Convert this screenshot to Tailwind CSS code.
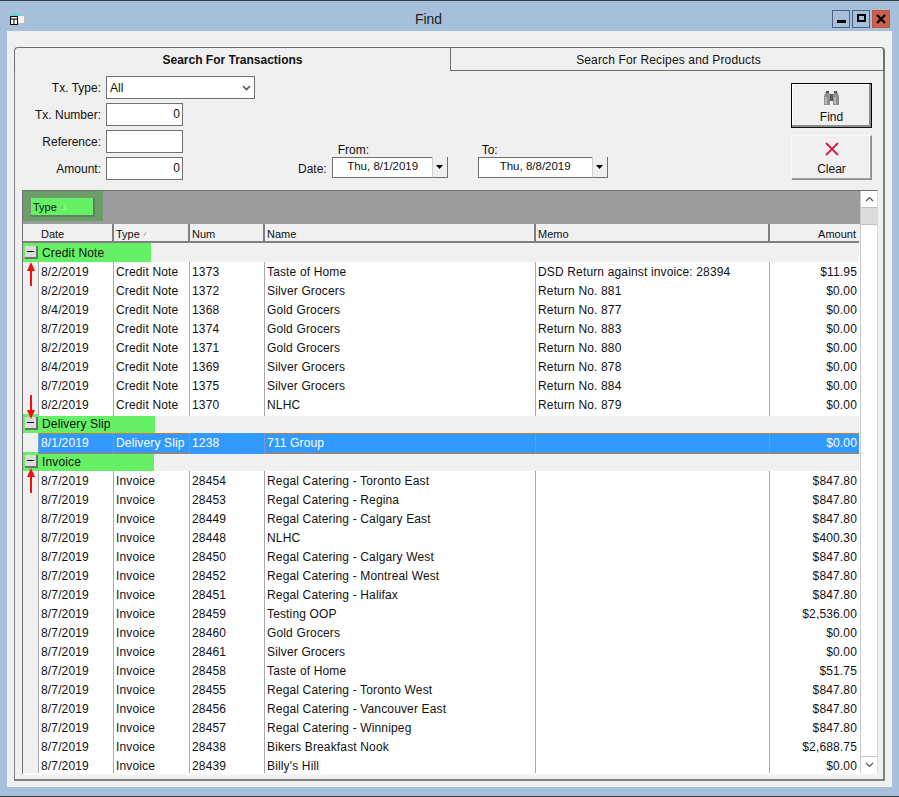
<!DOCTYPE html>
<html lang="en">
  <head>
    <meta charset="UTF-8" />
    <title>Find</title>
    <script src="https://cdn.jsdelivr.net/npm/@tailwindcss/browser@4"></script>
  </head>
  <body class="w-[899px] h-[797px] overflow-hidden bg-[#a6c0dc] font-['Liberation_Sans',Arial,sans-serif] text-[12px] text-[#111]">
    <div class="h-[797px] border-t border-b border-[#3c3c3c] flex flex-col">
      <!-- Title bar -->
      <div class="h-[30px] flex items-center shrink-0">
        <svg class="ml-[10px] mt-[8px] w-[15px] h-[12px]" viewBox="0 0 15 12">
          <rect x="2" y="0" width="10" height="2" fill="#5fd8dc" />
          <rect x="8" y="2" width="6" height="7" fill="#f4f4f4" />
          <path d="M14.5 3v7" stroke="#b8b8b8" />
          <rect x="0.5" y="2.5" width="7" height="8" fill="#fff" stroke="#000" />
          <path d="M0 5h8" stroke="#000" />
          <path d="M4 5v6" stroke="#000" />
        </svg>
        <div class="flex-1 text-center text-[14px] text-[#222] pt-[7px]">Find</div>
        <div class="flex gap-[2px] mr-[9px] mt-[6px]">
          <div class="w-[18px] h-[18px] border border-[#4f6180] flex items-end justify-center pb-[4px]">
            <div class="w-[9px] h-[3px] bg-black"></div>
          </div>
          <div class="w-[18px] h-[18px] border border-[#4f6180] flex items-center justify-center pb-[2px]">
            <div class="w-[9px] h-[8px] border-2 border-black"></div>
          </div>
          <div class="w-[18px] h-[18px] border border-[#b55a48] bg-[#cc6149] flex items-center justify-center">
            <svg class="w-[10px] h-[10px]" viewBox="0 0 10 10"><path d="M1 1l8 8M9 1l-8 8" stroke="#000" stroke-width="2.4" /></svg>
          </div>
        </div>
      </div>

      <!-- Window body -->
      <div class="mx-[7px] h-[756px] shrink-0 bg-[#f0f0f0] pt-[16px] px-[7px]">
        <!-- Tabs -->
        <div class="flex h-[24px]">
          <div class="w-[437px] bg-[#f0f0f0] border-t border-l border-r border-[#707070] rounded-tl-[4px] flex items-center justify-center font-bold text-[12px]">
            Search For Transactions
          </div>
          <div class="w-[434px] border-t border-r-2 border-b border-[#707070] rounded-tr-[4px] flex items-center justify-center pt-[2px] pl-[3px] tracking-[0.15px]">
            Search For Recipes and Products
          </div>
        </div>

        <div class="h-[710px] border-l border-r-2 border-b-2 border-[#808080]">
          <!-- Search form -->
          <div class="h-[119px] flex">
            <div class="w-[240px] pt-[5px] flex flex-col gap-[4px]">
              <div class="flex items-center h-[23px]">
                <label class="w-[91px] text-right pr-[5px]">Tx. Type:</label>
                <div class="w-[149px] h-[23px] bg-white border border-[#707070] flex items-center justify-between pl-[3px] pr-[3px]">
                  <span>All</span>
                  <svg class="w-[9px] h-[6px]" viewBox="0 0 9 6"><path d="M1 1l3.5 3.5L8 1" fill="none" stroke="#555" stroke-width="1.6" /></svg>
                </div>
              </div>
              <div class="flex items-center h-[23px]">
                <label class="w-[91px] text-right pr-[5px]">Tx. Number:</label>
                <div class="w-[77px] h-[23px] bg-white border border-[#707070] text-right pr-[2px] leading-[21px]">0</div>
              </div>
              <div class="flex items-center h-[23px]">
                <label class="w-[91px] text-right pr-[5px]">Reference:</label>
                <div class="w-[77px] h-[23px] bg-white border border-[#707070]"></div>
              </div>
              <div class="flex items-center h-[23px]">
                <label class="w-[91px] text-right pr-[5px]">Amount:</label>
                <div class="w-[77px] h-[23px] bg-white border border-[#707070] text-right pr-[2px] leading-[21px]">0</div>
              </div>
            </div>

            <!-- Date range -->
            <div class="w-[536px] pl-[43px] pt-[73px] flex items-start">
              <div class="flex items-end">
                <span class="mr-[5px] leading-[14px] mb-[2px]">Date:</span>
                <div>
                  <div class="pl-[6px] leading-[13px]">From:</div>
                  <div class="flex w-[116px] h-[21px]">
                    <div class="flex-1 bg-white border border-[#707070] border-r-0 text-center text-[11.5px] pl-[1px] leading-[17px]">Thu, 8/1/2019</div>
                    <div class="w-[16px] bg-[#f0f0f0] border border-t-0 border-[#707070] border-l-[#d0d0d0] flex items-center justify-center">
                      <svg class="w-[7px] h-[4px]" viewBox="0 0 7 4"><path d="M0 0h7L3.5 4z" fill="#000" /></svg>
                    </div>
                  </div>
                </div>
              </div>
              <div class="ml-[30px]">
                <div class="pl-[4px] leading-[13px]">To:</div>
                <div class="flex w-[130px] h-[21px]">
                  <div class="flex-1 bg-white border border-[#707070] border-r-0 text-center text-[11.5px] leading-[17px]">Thu, 8/8/2019</div>
                  <div class="w-[16px] bg-[#f0f0f0] border border-t-0 border-[#707070] border-l-[#d0d0d0] flex items-center justify-center">
                    <svg class="w-[7px] h-[4px]" viewBox="0 0 7 4"><path d="M0 0h7L3.5 4z" fill="#000" /></svg>
                  </div>
                </div>
              </div>
            </div>

            <!-- Buttons -->
            <div class="pt-[12px] flex flex-col gap-[7px]">
              <button class="w-[81px] h-[45px] border border-black bg-[#f0f0f0] border-b-[#111] shadow-[inset_-2px_-2px_0_#8c8c8c,inset_1px_1px_0_#fff] flex flex-col items-center pt-[6px]">
                <svg class="w-[17px] h-[16px]" viewBox="0 0 17 16">
                  <path d="M1 15V6l2-5h3l1 5v9z" fill="#8e8e8e" />
                  <path d="M10 15V6l1-5h3l2 5v9z" fill="#8e8e8e" />
                  <rect x="7" y="4" width="3" height="7" fill="#5a5a5a" />
                  <path d="M2 7h2v7H2zM11 7h2v7h-2z" fill="#b8b8b8" />
                  <path d="M3 1h3v2H3zM11 1h3v2h-3z" fill="#555" />
                </svg>
                <span class="mt-[2px]">Find</span>
              </button>
              <button class="w-[81px] h-[45px] bg-[#f0f0f0] border border-[#f8f8f8] border-r-[#8c8c8c] border-b-[#8c8c8c] shadow-[inset_-1px_-1px_0_#a8a8a8] flex flex-col items-center pt-[6px]">
                <svg class="w-[14px] h-[14px]" viewBox="0 0 14 14"><path d="M1 1l12 12M13 1L1 13" stroke="#d01f45" stroke-width="1.8" /></svg>
                <span class="mt-[4px]">Clear</span>
              </button>
            </div>
          </div>

          <!-- Results grid -->
          <div class="relative ml-[7px] w-[856px] h-[585px] border-t border-l border-[#707070] border-r border-r-[#d8d8d8] border-b-2 border-b-[#fbfbfb] flex">
            <div class="w-[837px] flex flex-col overflow-hidden">
              <!-- Group-by band -->
              <div class="h-[33px] shrink-0 bg-[#9c9c9c]">
                <div class="w-[80px] h-[30px] bg-[#6c9e6c] pl-[8px] pt-[7px]">
                  <div class="w-[64px] h-[19px] bg-[#66f066] border-r-2 border-b-2 border-[#5f7f5f] pl-[2px] pt-[1px] text-[11px] flex items-center gap-[3px]">
                    Type
                    <svg class="w-[7px] h-[6px]" viewBox="0 0 7 6"><path d="M3.5 0.5L0.5 5.5" stroke="#52c052" fill="none" /><path d="M3.5 0.5L6.5 5.5H0.5" stroke="#9cf79c" fill="none" /></svg>
                  </div>
                </div>
              </div>
              <!-- Column headers -->
              <div class="h-[19px] shrink-0 grid grid-cols-[16px_75px_76px_75px_271px_234px_89px] w-[836px] bg-[#f0f0f0] border-b-2 border-[#808080] leading-[21px] text-[11px]">
                <div></div>
                <div class="border-r-2 border-[#808080] pl-[2px]">Date</div>
                <div class="border-r-2 border-[#808080] pl-[2px] flex items-center gap-[3px] h-[17px] pt-[3px]">
                  Type
                  <svg class="w-[7px] h-[6px]" viewBox="0 0 7 6"><path d="M3.5 0.5L0.5 5.5" stroke="#a0a0a0" fill="none" /><path d="M3.5 0.5L6.5 5.5H0.5" stroke="#fff" fill="none" /></svg>
                </div>
                <div class="border-r-2 border-[#808080] pl-[2px]">Num</div>
                <div class="border-r-2 border-[#808080] pl-[2px]">Name</div>
                <div class="border-r-2 border-[#808080] pl-[2px]">Memo</div>
                <div class="text-right pr-[3px]">Amount</div>
              </div>
              <div id="rows" class="flex-1 bg-white overflow-hidden w-[837px] tracking-[0.15px]"></div>
            </div>

            <!-- Scrollbar -->
            <div class="w-[17px] bg-white flex flex-col border-l border-[#c8c8c8]">
              <div class="h-[17px] flex items-center justify-center border-b border-[#c0c0c0]">
                <svg class="w-[9px] h-[6px]" viewBox="0 0 9 6"><path d="M1 5l3.5-3.5L8 5" fill="none" stroke="#555" stroke-width="1.2" /></svg>
              </div>
              <div class="h-[17px] bg-[#dcdcdc] border-b border-[#c0c0c0]"></div>
              <div class="flex-1"></div>
              <div class="h-[17px] flex items-center justify-center border-t border-[#c0c0c0]">
                <svg class="w-[9px] h-[6px]" viewBox="0 0 9 6"><path d="M1 1l3.5 3.5L8 1" fill="none" stroke="#555" stroke-width="1.2" /></svg>
              </div>
            </div>

            <!-- Red annotation arrows -->
            <svg class="absolute left-[3px] top-[71px] w-[10px] h-[24px]" viewBox="0 0 10 24"><path d="M5 24V7" stroke="#f01010" stroke-width="2" /><path d="M5 0l4 9H1z" fill="#f01010" /></svg>
            <svg class="absolute left-[3px] top-[204px] w-[10px] h-[24px]" viewBox="0 0 10 24"><path d="M5 0v17" stroke="#f01010" stroke-width="2" /><path d="M5 24l4-9H1z" fill="#f01010" /></svg>
            <svg class="absolute left-[3px] top-[277px] w-[10px] h-[25px]" viewBox="0 0 10 25"><path d="M5 25V7" stroke="#f01010" stroke-width="2" /><path d="M5 0l4 9H1z" fill="#f01010" /></svg>
          </div>
        </div>
      </div>
    </div>

    <script>
      const creditNotes = [
        ["8/2/2019", "1373", "Taste of Home", "DSD Return against invoice: 28394", "$11.95"],
        ["8/2/2019", "1372", "Silver Grocers", "Return No. 881", "$0.00"],
        ["8/4/2019", "1368", "Gold Grocers", "Return No. 877", "$0.00"],
        ["8/7/2019", "1374", "Gold Grocers", "Return No. 883", "$0.00"],
        ["8/2/2019", "1371", "Gold Grocers", "Return No. 880", "$0.00"],
        ["8/4/2019", "1369", "Silver Grocers", "Return No. 878", "$0.00"],
        ["8/7/2019", "1375", "Silver Grocers", "Return No. 884", "$0.00"],
        ["8/2/2019", "1370", "NLHC", "Return No. 879", "$0.00"],
      ];
      const invoices = [
        ["28454", "Regal Catering - Toronto East", "$847.80"],
        ["28453", "Regal Catering - Regina", "$847.80"],
        ["28449", "Regal Catering - Calgary East", "$847.80"],
        ["28448", "NLHC", "$400.30"],
        ["28450", "Regal Catering - Calgary West", "$847.80"],
        ["28452", "Regal Catering - Montreal West", "$847.80"],
        ["28451", "Regal Catering - Halifax", "$847.80"],
        ["28459", "Testing OOP", "$2,536.00"],
        ["28460", "Gold Grocers", "$0.00"],
        ["28461", "Silver Grocers", "$0.00"],
        ["28458", "Taste of Home", "$51.75"],
        ["28455", "Regal Catering - Toronto West", "$847.80"],
        ["28456", "Regal Catering - Vancouver East", "$847.80"],
        ["28457", "Regal Catering - Winnipeg", "$847.80"],
        ["28438", "Bikers Breakfast Nook", "$2,688.75"],
        ["28439", "Billy's Hill", "$0.00"],
      ];

      function group(label, green) {
        return `<div class="h-[19px] w-[836px] bg-[#f0f0f0]">
          <div class="h-[19px] bg-[#66f066] flex items-center" style="width:${green}px">
            <div class="ml-[2px] w-[13px] h-[13px] bg-[#dcdcdc] border-r-2 border-b-2 border-[#707070] flex items-center justify-center"><div class="w-[7px] h-px bg-black"></div></div>
            <span class="ml-[4px]">${label}</span>
          </div>
        </div>`;
      }

      function row(date, type, num, name, memo, amount, selected) {
        const line = selected
          ? "bg-[#3399ff] text-white leading-[19px] border-y border-dotted border-y-[#c9803a]"
          : "bg-white";
        return `<div class="h-[19px] leading-[21px] grid grid-cols-[15px_75px_76px_75px_271px_234px_90px] w-[836px] bg-[#f0f0f0]">
          <div></div>
          <div class="${line} border-l border-l-[#a8a8a8] pl-[2px]">${date}</div>
          <div class="${line} border-l border-l-[#a8a8a8] pl-[2px]">${type}</div>
          <div class="${line} border-l border-l-[#a8a8a8] pl-[2px]">${num}</div>
          <div class="${line} border-l border-l-[#a8a8a8] pl-[2px]">${name}</div>
          <div class="${line} border-l border-l-[#a8a8a8] pl-[2px]">${memo}</div>
          <div class="${line} border-l border-l-[#a8a8a8] text-right pr-[2px]">${amount}</div>
        </div>`;
      }

      let html = group("Credit Note", 128);
      creditNotes.forEach((r) => { html += row(r[0], "Credit Note", r[1], r[2], r[3], r[4], false); });
      html += group("Delivery Slip", 132);
      html += row("8/1/2019", "Delivery Slip", "1238", "711 Group", "", "$0.00", true);
      html += group("Invoice", 131);
      invoices.forEach((r) => { html += row("8/7/2019", "Invoice", r[0], r[1], "", r[2], false); });
      document.getElementById("rows").innerHTML = html;
    </script>
  </body>
</html>
